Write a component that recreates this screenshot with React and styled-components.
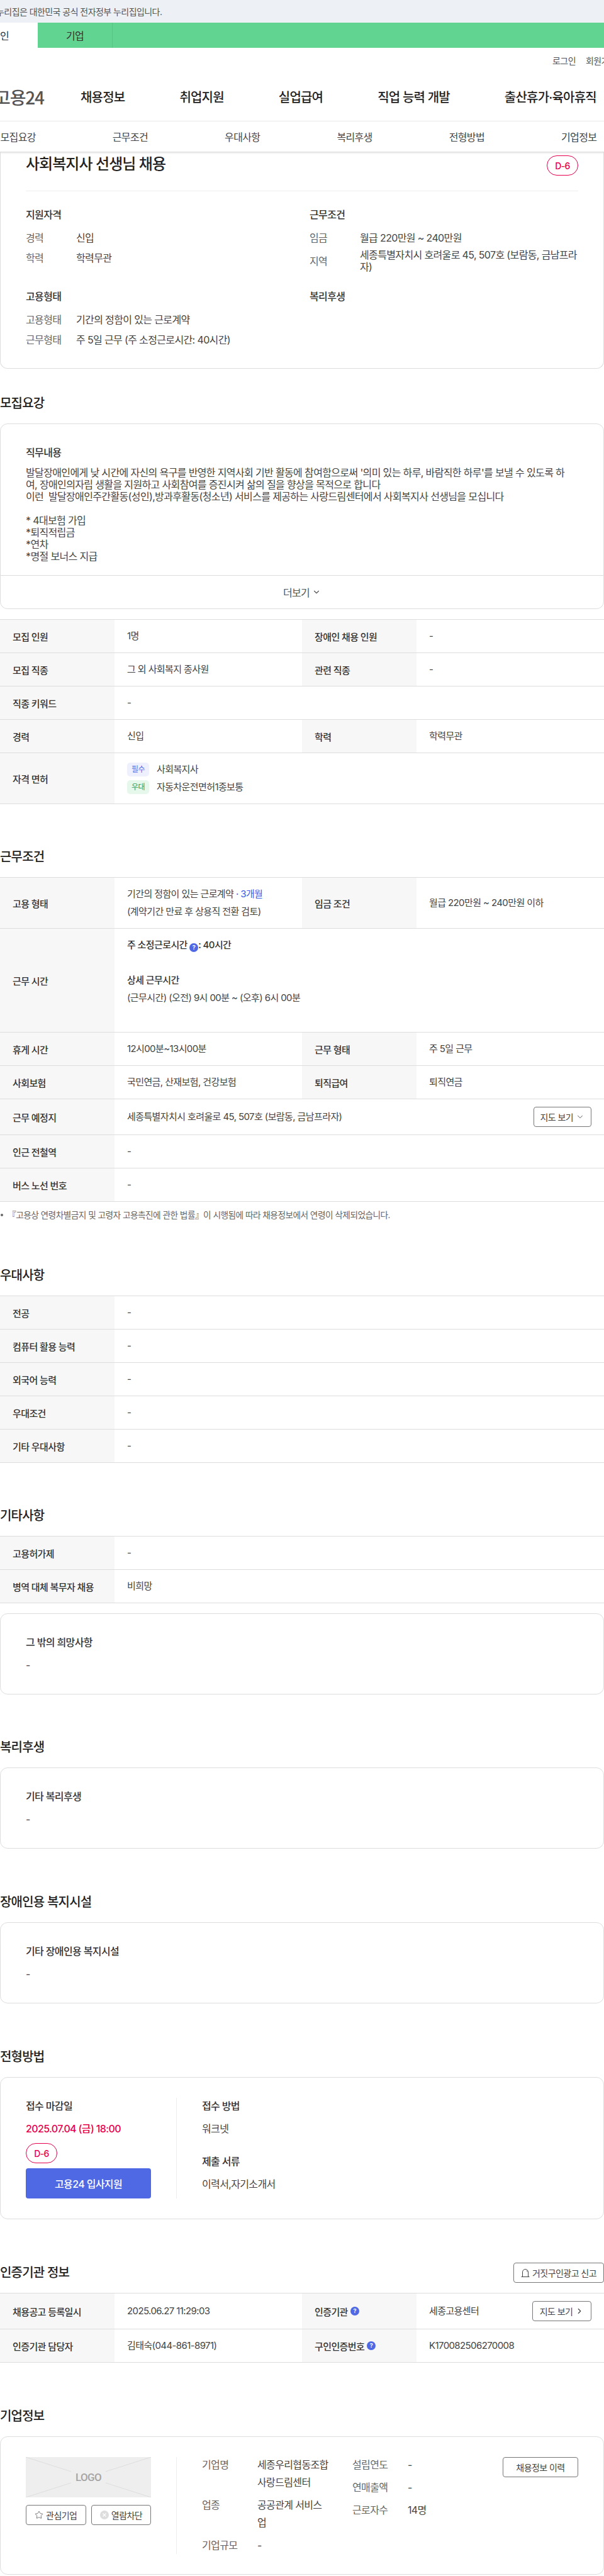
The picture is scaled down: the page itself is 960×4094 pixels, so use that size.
import React from 'react';
import styled, {createGlobalStyle} from 'styled-components';
import {ChevronDown, ChevronRight, Star} from 'lucide-react';

const GlobalStyle = createGlobalStyle`
    * {
        box-sizing: border-box;
        letter-spacing: -0.04em;
    }
    body {
        margin: 0;
        background: #fff;
        color: #444;
        font-family: Inter, "Noto Sans CJK KR", sans-serif;
        font-size: 15px;
    }
`;

const Page = styled.div`
    width: 960px;
    overflow: hidden;
`;

const Banner = styled.div`
    height: 36px;
    display: flex;
    align-items: center;
    background: #edf0f5;
    font-size: 14px;
    color: #555;
    white-space: nowrap;
`;

const BannerText = styled.span`
    margin-left: -6px;
`;

const TabBar = styled.div`
    height: 40px;
    display: flex;
    background: #62d491;
`;

const Tab = styled.div`
    width: ${p => (p.$active ? '60px' : '119px')};
    display: flex;
    align-items: center;
    justify-content: ${p => (p.$active ? 'flex-start' : 'center')};
    background: ${p => (p.$active ? '#fff' : 'transparent')};
    border-right: ${p => (p.$active ? 'none' : '1px solid #58c584')};
    font-size: 16px;
    color: #333;
`;

const Utility = styled.div`
    height: 40px;
    padding-left: 878px;
    display: flex;
    align-items: center;
    gap: 16px;
    font-size: 14px;
    color: #555;
    white-space: nowrap;
`;

const MainNav = styled.nav`
    height: 77px;
    display: flex;
    align-items: center;
    gap: 87px;
    padding-bottom: 1px;
    border-bottom: 1px solid #eee;
    white-space: nowrap;
`;

const Logo = styled.div`
    margin-left: -9px;
    margin-right: -29px;
    font-family: "Noto Sans CJK KR", sans-serif;
    font-size: 28px;
    font-weight: 500;
    color: #555;
`;

const NavLink = styled.a`
    font-size: 20px;
    font-weight: 500;
    color: #222;
`;

const SubNav = styled.div`
    height: 49px;
    margin-left: -60.5px;
    display: flex;
    align-items: center;
    border-bottom: 1px solid #ddd;
    box-shadow: 0 1px 3px rgba(0, 0, 0, 0.12);
    width: 1100px;
`;

const SubLink = styled.a`
    width: 178.3px;
    text-align: center;
    font-size: 16px;
    color: #444;
`;

const SummaryCard = styled.div`
    height: 344px;
    padding: 5px 40px 0;
    border: 1px solid #ddd;
    border-top: none;
    border-radius: 0 0 12px 12px;
`;

const TitleRow = styled.div`
    display: flex;
    justify-content: space-between;
    padding-bottom: 24px;
    border-bottom: 1px solid #eee;
`;

const Title = styled.h1`
    margin: -2px 0 0;
    font-size: 24px;
    line-height: 32px;
    font-weight: 500;
    color: #222;
`;

const DayBadge = styled.div`
    width: 50px;
    height: 32px;
    display: flex;
    align-items: center;
    justify-content: center;
    border: 1px solid #e6004d;
    border-radius: 16px;
    font-size: 14px;
    font-weight: 500;
    color: #e6004d;
`;

const SummaryGrid = styled.div`
    margin-top: 25px;
    display: grid;
    grid-template-columns: 1fr 1fr;
    column-gap: 24px;
    row-gap: 25px;
`;

const SummaryHead = styled.div`
    font-size: 16px;
    font-weight: 500;
    line-height: 24px;
    color: #333;
`;

const SummaryList = styled.div`
    margin-top: 13px;
    display: flex;
    flex-direction: column;
    gap: ${p => p.$gap || 8}px;
`;

const SummaryRow = styled.div`
    display: grid;
    grid-template-columns: 80px 1fr;
    align-items: center;
    min-height: 24px;
    font-size: 16px;
    line-height: 19px;
`;

const SummaryKey = styled.span`
    color: #666;
`;

const Section = styled.section`
    margin-top: ${p => p.$top || 71}px;
`;

const HeadRow = styled.div`
    height: 28px;
    margin-bottom: 18px;
    display: flex;
    align-items: center;
    justify-content: space-between;
`;

const Heading = styled.h2`
    margin: 0;
    font-size: 20px;
    font-weight: 500;
    line-height: 28px;
    color: #222;
`;

const Card = styled.div`
    border: 1px solid #ddd;
    border-radius: 12px;
    margin-top: ${p => p.$top || 0}px;
`;

const CardBody = styled.div`
    padding: 32px 40px 33px;
`;

const BoxTitle = styled.div`
    font-size: 16px;
    font-weight: 500;
    line-height: 26px;
    color: #333;
`;

const BoxText = styled.div`
    margin-top: 10px;
    font-size: 16px;
    line-height: 26px;
    color: ${p => (p.$red ? '#e6004d' : '#444')};
    font-weight: ${p => (p.$red ? 500 : 400)};
`;

const JobBody = styled.div`
    padding: 32px 40px 20px;
    border-bottom: 1px solid #ddd;
`;

const JobText = styled.p`
    margin: 10px 0 0;
    font-size: 16px;
    line-height: 19px;
    white-space: nowrap;
    color: #444;
`;

const MoreRow = styled.div`
    height: 52px;
    display: flex;
    align-items: center;
    justify-content: center;
    gap: 4px;
    font-size: 16px;
    color: #555;
`;

const Table = styled.div`
    border-top: 1px solid #ddd;
    margin-top: ${p => p.$top || 0}px;
`;

const Row = styled.div`
    display: grid;
    grid-template-columns: ${p => (p.$wide ? '182px 1fr' : '182px 298px 182px 298px')};
    border-bottom: 1px solid #ddd;
`;

const Label = styled.div`
    display: flex;
    align-items: center;
    gap: 4px;
    padding: 0 20px;
    background: #f7f7f7;
    font-size: 15px;
    font-weight: 500;
    color: #333;
`;

const Value = styled.div`
    display: flex;
    flex-direction: ${p => (p.$between ? 'row' : 'column')};
    justify-content: ${p => (p.$between ? 'space-between' : 'center')};
    align-items: ${p => (p.$between ? 'center' : 'flex-start')};
    padding: 12px 20px;
    font-size: 15px;
    line-height: 28px;
    color: #444;
`;

const Strong = styled.div`
    font-weight: 500;
    color: #333;
`;

const Blank = styled.div`
    height: 28px;
`;

const Accent = styled.span`
    color: #3a5be8;
`;

const Help = styled.span`
    width: 14px;
    height: 14px;
    display: inline-flex;
    flex: none;
    align-items: center;
    justify-content: center;
    vertical-align: -2px;
    border-radius: 50%;
    background: #4f68e3;
    font-size: 9px;
    line-height: 14px;
    font-weight: 700;
    color: #fff;
`;

const Licence = styled.div`
    display: flex;
    align-items: center;
    gap: 12px;
`;

const Tag = styled.span`
    width: 35px;
    height: 22px;
    display: inline-flex;
    align-items: center;
    justify-content: center;
    border-radius: 5px;
    background: ${p => (p.$green ? '#e6f7ec' : '#eef0fd')};
    font-size: 12px;
    color: ${p => (p.$green ? '#2e9e5b' : '#5a6ee8')};
`;

const OutlineButton = styled.button`
    height: 32px;
    width: ${p => (p.$w ? p.$w + 'px' : 'auto')};
    padding: 0 ${p => (p.$w ? 0 : 11)}px;
    display: inline-flex;
    align-items: center;
    justify-content: center;
    gap: 4px;
    flex: none;
    background: #fff;
    border: 1px solid #777;
    border-radius: 4px;
    font-family: inherit;
    font-size: 14px;
    color: #444;
    white-space: nowrap;
`;

const Note = styled.div`
    margin-top: 11px;
    display: flex;
    align-items: center;
    gap: 7px;
    font-size: 13.7px;
    line-height: 20px;
    color: #666;
    &::before {
        content: '';
        width: 4px;
        height: 4px;
        margin-left: 1px;
        border-radius: 50%;
        background: #666;
    }
`;

const Split = styled.div`
    display: flex;
    padding: 32px 40px;
`;

const LeftCol = styled.div`
    width: 240px;
    padding-right: 40px;
    flex: none;
    display: flex;
    flex-direction: column;
    border-right: 1px solid #eee;
`;

const RightCol = styled.div`
    flex: 1;
    padding-left: 40px;
    display: flex;
`;

const Spaced = styled.div`
    margin-top: 26px;
`;

const ApplyBadge = styled(DayBadge)`
    margin-top: 10px;
`;

const ApplyButton = styled.button`
    height: 48px;
    margin-top: 8px;
    border: none;
    border-radius: 4px;
    background: #4f68e3;
    font-family: inherit;
    font-size: 16px;
    font-weight: 500;
    color: #fff;
`;

const LogoBox = styled.div`
    position: relative;
    height: 64px;
    display: flex;
    align-items: center;
    justify-content: center;
    background: #eee;
    font-family: Roboto, sans-serif;
    font-size: 17px;
    font-weight: 500;
    color: #a5a5a5;
`;

const LogoLines = styled.svg`
    position: absolute;
    inset: 0;
    width: 100%;
    height: 100%;
`;

const CompanyButtons = styled.div`
    margin-top: 12px;
    display: grid;
    grid-template-columns: 95.5px 95px;
    gap: 8.5px;
`;

const FactList = styled.dl`
    margin: -2px 0 0;
    display: grid;
    grid-template-columns: ${p => p.$cols};
    align-content: start;
    row-gap: 8px;
    font-size: 16px;
    line-height: 28px;
`;

const FactKey = styled.dt`
    color: #666;
`;

const FactValue = styled.dd`
    margin: 0;
    color: #444;
`;

const HistoryCol = styled.div`
    margin-left: auto;
`;

const ReportIcon = () => (
    <svg width="14" height="16" viewBox="0 0 14 16" fill="none" stroke="#444" strokeWidth="1">
        <path d="M2.5 14V7a4.5 4.5 0 0 1 9 0v7" />
        <path d="M0.5 14.5h13" />
        <path d="M9 4.5c.8.5 1 1.2 1 2" />
    </svg>
);

const BlockIcon = () => (
    <svg width="14" height="14" viewBox="0 0 14 14">
        <circle cx="7" cy="7" r="7" fill="#ddd" />
        <path d="M4.5 4.5l5 5M9.5 4.5l-5 5" stroke="#fff" strokeWidth="1.2" />
    </svg>
);

const Header = () => (
    <header>
        <Banner><BannerText>누리집은 대한민국 공식 전자정부 누리집입니다.</BannerText></Banner>
        <TabBar>
            <Tab $active>인</Tab>
            <Tab>기업</Tab>
        </TabBar>
        <Utility>
            <span>로그인</span>
            <span>회원가입</span>
        </Utility>
        <MainNav>
            <Logo>고용24</Logo>
            <NavLink>채용정보</NavLink>
            <NavLink>취업지원</NavLink>
            <NavLink>실업급여</NavLink>
            <NavLink>직업 능력 개발</NavLink>
            <NavLink>출산휴가·육아휴직</NavLink>
        </MainNav>
        <SubNav>
            {['모집요강', '근무조건', '우대사항', '복리후생', '전형방법', '기업정보'].map(name => (
                <SubLink key={name}>{name}</SubLink>
            ))}
        </SubNav>
    </header>
);

const Summary = () => (
    <SummaryCard>
        <TitleRow>
            <Title>사회복지사 선생님 채용</Title>
            <DayBadge>D-6</DayBadge>
        </TitleRow>
        <SummaryGrid>
            <div>
                <SummaryHead>지원자격</SummaryHead>
                <SummaryList>
                    <SummaryRow><SummaryKey>경력</SummaryKey><span>신입</span></SummaryRow>
                    <SummaryRow><SummaryKey>학력</SummaryKey><span>학력무관</span></SummaryRow>
                </SummaryList>
            </div>
            <div>
                <SummaryHead>근무조건</SummaryHead>
                <SummaryList $gap={6}>
                    <SummaryRow><SummaryKey>임금</SummaryKey><span>월급 220만원 ~ 240만원</span></SummaryRow>
                    <SummaryRow><SummaryKey>지역</SummaryKey><span>세종특별자치시 호려울로 45, 507호 (보람동, 금남프라<br />자)</span></SummaryRow>
                </SummaryList>
            </div>
            <div>
                <SummaryHead>고용형태</SummaryHead>
                <SummaryList>
                    <SummaryRow><SummaryKey>고용형태</SummaryKey><span>기간의 정함이 있는 근로계약</span></SummaryRow>
                    <SummaryRow><SummaryKey>근무형태</SummaryKey><span>주 5일 근무 (주 소정근로시간: 40시간)</span></SummaryRow>
                </SummaryList>
            </div>
            <div>
                <SummaryHead>복리후생</SummaryHead>
            </div>
        </SummaryGrid>
    </SummaryCard>
);

const App = () => {
    return (
        <Page>
            <GlobalStyle />
            <Header />
            <Summary />

            <Section $top={41}>
                <HeadRow><Heading>모집요강</Heading></HeadRow>
                <Card>
                    <JobBody>
                        <BoxTitle>직무내용</BoxTitle>
                        <JobText>
                            발달장애인에게 낮 시간에 자신의 욕구를 반영한 지역사회 기반 활동에 참여함으로써 '의미 있는 하루, 바람직한 하루'를 보낼 수 있도록 하<br />
                            여, 장애인의자립 생활을 지원하고 사회참여를 증진시켜 삶의 질을 향상을 목적으로 합니다<br />
                            이런 &nbsp;발달장애인주간활동(성인),방과후활동(청소년) 서비스를 제공하는 사랑드림센터에서 사회복지사 선생님을 모십니다<br />
                            <br />
                            * 4대보험 가입<br />
                            *퇴직적립금<br />
                            *연차<br />
                            *명절 보너스 지급
                        </JobText>
                    </JobBody>
                    <MoreRow>더보기 <ChevronDown size={14} strokeWidth={2} /></MoreRow>
                </Card>
                <Table $top={16}>
                    <Row>
                        <Label>모집 인원</Label><Value>1명</Value>
                        <Label>장애인 채용 인원</Label><Value>-</Value>
                    </Row>
                    <Row>
                        <Label>모집 직종</Label><Value>그 외 사회복지 종사원</Value>
                        <Label>관련 직종</Label><Value>-</Value>
                    </Row>
                    <Row $wide><Label>직종 키워드</Label><Value>-</Value></Row>
                    <Row>
                        <Label>경력</Label><Value>신입</Value>
                        <Label>학력</Label><Value>학력무관</Value>
                    </Row>
                    <Row $wide>
                        <Label>자격 면허</Label>
                        <Value>
                            <Licence><Tag>필수</Tag>사회복지사</Licence>
                            <Licence><Tag $green>우대</Tag>자동차운전면허1종보통</Licence>
                        </Value>
                    </Row>
                </Table>
            </Section>

            <Section $top={70}>
                <HeadRow><Heading>근무조건</Heading></HeadRow>
                <Table>
                    <Row>
                        <Label>고용 형태</Label>
                        <Value>
                            <div>기간의 정함이 있는 근로계약 <Accent>· 3개월</Accent></div>
                            <div>(계약기간 만료 후 상용직 전환 검토)</div>
                        </Value>
                        <Label>임금 조건</Label>
                        <Value>월급 220만원 ~ 240만원 이하</Value>
                    </Row>
                    <Row $wide>
                        <Label>근무 시간</Label>
                        <Value>
                            <Strong>주 소정근로시간 <Help>?</Help>: 40시간</Strong>
                            <Blank />
                            <Strong>상세 근무시간</Strong>
                            <div>(근무시간) (오전) 9시 00분 ~ (오후) 6시 00분</div>
                            <Blank />
                        </Value>
                    </Row>
                    <Row>
                        <Label>휴게 시간</Label><Value>12시00분~13시00분</Value>
                        <Label>근무 형태</Label><Value>주 5일 근무</Value>
                    </Row>
                    <Row>
                        <Label>사회보험</Label><Value>국민연금, 산재보험, 건강보험</Value>
                        <Label>퇴직급여</Label><Value>퇴직연금</Value>
                    </Row>
                    <Row $wide>
                        <Label>근무 예정지</Label>
                        <Value $between>
                            세종특별자치시 호려울로 45, 507호 (보람동, 금남프라자)
                            <OutlineButton $w={92.5}>지도 보기 <ChevronDown size={14} strokeWidth={1.5} /></OutlineButton>
                        </Value>
                    </Row>
                    <Row $wide><Label>인근 전철역</Label><Value>-</Value></Row>
                    <Row $wide><Label>버스 노선 번호</Label><Value>-</Value></Row>
                </Table>
                <Note>『고용상 연령차별금지 및 고령자 고용촉진에 관한 법률』이 시행됨에 따라 채용정보에서 연령이 삭제되었습니다.</Note>
            </Section>

            <Section $top={72}>
                <HeadRow><Heading>우대사항</Heading></HeadRow>
                <Table>
                    <Row $wide><Label>전공</Label><Value>-</Value></Row>
                    <Row $wide><Label>컴퓨터 활용 능력</Label><Value>-</Value></Row>
                    <Row $wide><Label>외국어 능력</Label><Value>-</Value></Row>
                    <Row $wide><Label>우대조건</Label><Value>-</Value></Row>
                    <Row $wide><Label>기타 우대사항</Label><Value>-</Value></Row>
                </Table>
            </Section>

            <Section $top={70}>
                <HeadRow><Heading>기타사항</Heading></HeadRow>
                <Table>
                    <Row $wide><Label>고용허가제</Label><Value>-</Value></Row>
                    <Row $wide><Label>병역 대체 복무자 채용</Label><Value>비희망</Value></Row>
                </Table>
                <Card $top={16}>
                    <CardBody>
                        <BoxTitle>그 밖의 희망사항</BoxTitle>
                        <BoxText>-</BoxText>
                    </CardBody>
                </Card>
            </Section>

            <Section $top={70}>
                <HeadRow><Heading>복리후생</Heading></HeadRow>
                <Card>
                    <CardBody>
                        <BoxTitle>기타 복리후생</BoxTitle>
                        <BoxText>-</BoxText>
                    </CardBody>
                </Card>
            </Section>

            <Section>
                <HeadRow><Heading>장애인용 복지시설</Heading></HeadRow>
                <Card>
                    <CardBody>
                        <BoxTitle>기타 장애인용 복지시설</BoxTitle>
                        <BoxText>-</BoxText>
                    </CardBody>
                </Card>
            </Section>

            <Section>
                <HeadRow><Heading>전형방법</Heading></HeadRow>
                <Card>
                    <Split>
                        <LeftCol>
                            <BoxTitle>접수 마감일</BoxTitle>
                            <BoxText $red>2025.07.04 (금) 18:00</BoxText>
                            <ApplyBadge>D-6</ApplyBadge>
                            <ApplyButton>고용24 입사지원</ApplyButton>
                        </LeftCol>
                        <RightCol>
                            <div>
                                <BoxTitle>접수 방법</BoxTitle>
                                <BoxText>워크넷</BoxText>
                                <Spaced>
                                    <BoxTitle>제출 서류</BoxTitle>
                                    <BoxText>이력서,자기소개서</BoxText>
                                </Spaced>
                            </div>
                        </RightCol>
                    </Split>
                </Card>
            </Section>

            <Section>
                <HeadRow>
                    <Heading>인증기관 정보</Heading>
                    <OutlineButton $w={144}><ReportIcon /> 거짓구인광고 신고</OutlineButton>
                </HeadRow>
                <Table>
                    <Row>
                        <Label>채용공고 등록일시</Label><Value>2025.06.27 11:29:03</Value>
                        <Label>인증기관 <Help>?</Help></Label>
                        <Value $between>
                            세종고용센터
                            <OutlineButton $w={94}>지도 보기 <ChevronRight size={14} strokeWidth={2} /></OutlineButton>
                        </Value>
                    </Row>
                    <Row>
                        <Label>인증기관 담당자</Label><Value>김태숙(044-861-8971)</Value>
                        <Label>구인인증번호 <Help>?</Help></Label><Value>K170082506270008</Value>
                    </Row>
                </Table>
            </Section>

            <Section>
                <HeadRow><Heading>기업정보</Heading></HeadRow>
                <Card>
                    <Split>
                        <LeftCol>
                            <LogoBox>
                                <LogoLines viewBox="0 0 199 64" preserveAspectRatio="none" stroke="#ddd" strokeWidth="1">
                                    <path d="M0 0L72 23M199 0L127 23M0 64L72 41M199 64L127 41" />
                                </LogoLines>
                                LOGO
                            </LogoBox>
                            <CompanyButtons>
                                <OutlineButton><Star size={14} strokeWidth={1.2} /> 관심기업</OutlineButton>
                                <OutlineButton><BlockIcon /> 열람차단</OutlineButton>
                            </CompanyButtons>
                        </LeftCol>
                        <RightCol>
                            <FactList $cols="88px 151px">
                                <FactKey>기업명</FactKey>
                                <FactValue>세종우리협동조합<br />사랑드림센터</FactValue>
                                <FactKey>업종</FactKey>
                                <FactValue>공공관계 서비스<br />업</FactValue>
                                <FactKey>기업규모</FactKey>
                                <FactValue>-</FactValue>
                            </FactList>
                            <FactList $cols="88px 80px">
                                <FactKey>설립연도</FactKey>
                                <FactValue>-</FactValue>
                                <FactKey>연매출액</FactKey>
                                <FactValue>-</FactValue>
                                <FactKey>근로자수</FactKey>
                                <FactValue>14명</FactValue>
                            </FactList>
                            <HistoryCol>
                                <OutlineButton $w={120}>채용정보 이력</OutlineButton>
                            </HistoryCol>
                        </RightCol>
                    </Split>
                </Card>
            </Section>
        </Page>
    );
};

export default App;
